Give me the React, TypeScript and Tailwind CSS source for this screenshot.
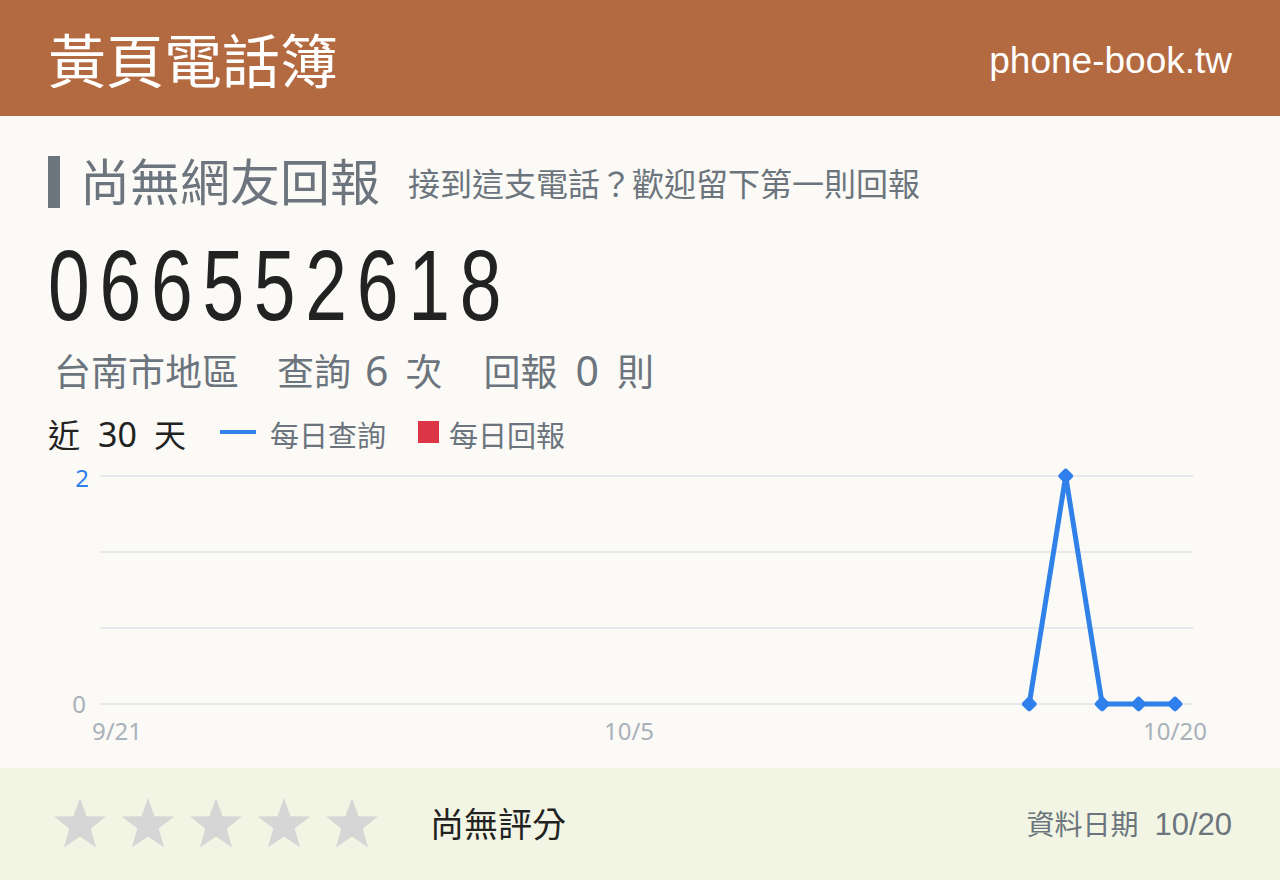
import React from "react"

const cjk = "font-['Noto_Sans','Noto_Sans_CJK_TC',sans-serif]"

// daily lookup counts for the last 30 days (null = no data)
const daily: (number | null)[] = [
  ...Array(25).fill(null),
  0, 2, 0, 0, 0,
]

function Star() {
  return (
    <svg width="56" height="56" viewBox="0 0 56 56">
      <polygon
        points="28,2 34.6,20.3 54,20.6 38.7,32.6 44.1,51.5 28,40.4 11.9,51.5 17.3,32.6 2,20.6 21.4,20.3"
        fill="#d6d6d6"
      />
    </svg>
  )
}

function Chart() {
  const x0 = 70
  const step = 36.45
  const yFor = (v: number) => 244 - v * 114
  const pts = daily
    .map((v, i) => (v === null ? null : { x: x0 + i * step, y: yFor(v) }))
    .filter((p): p is { x: number; y: number } => p !== null)

  return (
    <svg width="1184" height="300" viewBox="0 0 1184 300" className="block">
      {[16, 92, 168, 244].map((y) => (
        <line key={y} x1="52" x2="1145" y1={y} y2={y} stroke="#e7e8ec" strokeWidth="2" />
      ))}
      <g style={{ fontFamily: "'Noto Sans', sans-serif" }} fontSize="24">
        <text x="41" y="27" textAnchor="end" fill="#2f80ed">2</text>
        <text x="38" y="253" textAnchor="end" fill="#a9b0b8">0</text>
        <text x="69" y="280" textAnchor="middle" fill="#a9b1ba">9/21</text>
        <text x="581" y="280" textAnchor="middle" fill="#a9b1ba">10/5</text>
        <text x="1127" y="280" textAnchor="middle" fill="#a9b1ba">10/20</text>
      </g>
      <polyline
        points={pts.map((p) => `${p.x},${p.y}`).join(" ")}
        fill="none"
        stroke="#3182e8"
        strokeWidth="5"
        strokeLinejoin="round"
      />
      {pts.map((p) => (
        <rect
          key={p.x}
          x={p.x - 6}
          y={p.y - 6}
          width="12"
          height="12"
          rx="3"
          fill="#2f80ec"
          transform={`rotate(45 ${p.x} ${p.y})`}
        />
      ))}
    </svg>
  )
}

export default function App() {
  return (
    <div className="w-[1280px] h-[880px] bg-[#fbfaf6] flex flex-col">
      <header className="h-[116px] shrink-0 bg-[#b46a40] flex items-center justify-between pl-12 pr-12">
        <h1 className="text-[58px] leading-none text-white font-['Noto_Sans_CJK_TC',sans-serif]">黃頁電話簿</h1>
        <span className="text-[37px] leading-none text-white font-['Liberation_Sans',sans-serif] mt-1">
          phone-book.tw
        </span>
      </header>

      <main className="h-[652px] shrink-0 pl-12 pt-10">
        <div className="flex items-center h-[52px]">
          <div className="w-3 h-[52px] bg-[#6c757d]" />
          <h2 className={`ml-5 text-[50px] leading-none text-[#6c757d] ${cjk}`}>尚無網友回報</h2>
          <p className={`ml-7 mt-1 text-[32px] leading-none text-[#6c757d] ${cjk}`}>
            接到這支電話？歡迎留下第一則回報
          </p>
        </div>

        <div className="mt-[27px] h-[100px] overflow-visible">
          <div className="origin-left scale-x-[0.75] w-max text-[100px] leading-none text-[#222] tracking-[13px] font-['Liberation_Sans',sans-serif]">
            066552618
          </div>
        </div>

        <div className={`mt-[15px] h-9 flex items-baseline text-[37px] leading-none text-[#6c757d] pl-1.5 ${cjk}`}>
          <span>台南市地區</span>
          <span className="ml-[38px]">查詢</span>
          <span className="ml-3.5 text-[41px]">6</span>
          <span className="ml-[17px]">次</span>
          <span className="ml-[41px]">回報</span>
          <span className="ml-[18px] text-[41px]">0</span>
          <span className="ml-[18px]">則</span>
        </div>

        <div className={`mt-[31px] h-[30px] flex items-baseline ${cjk}`}>
          <span className="text-[32px] leading-none text-[#222]">近</span>
          <span className="ml-[18px] text-[34px] leading-none text-[#222]">30</span>
          <span className="ml-[17px] text-[32px] leading-none text-[#222]">天</span>
          <span className="ml-[34px] w-9 h-1 bg-[#3182e8] self-center" />
          <span className="ml-3.5 text-[29px] leading-none text-[#6c757d]">每日查詢</span>
          <span className="ml-8 w-[21px] h-[22px] bg-[#dc3545] self-center" />
          <span className="ml-2.5 text-[29px] leading-none text-[#6c757d]">每日回報</span>
        </div>

        <div className="mt-[13px]">
          <Chart />
        </div>
      </main>

      <footer className="h-[112px] shrink-0 bg-[#f2f5e3] flex items-center pl-[52px] pr-12">
        <div className="flex gap-3">
          {[0, 1, 2, 3, 4].map((i) => (
            <Star key={i} />
          ))}
        </div>
        <span className={`ml-[50px] text-[34px] leading-none text-[#222] ${cjk}`}>尚無評分</span>
        <div className="ml-auto flex items-baseline text-[#6c757d]">
          <span className={`text-[28px] leading-none ${cjk}`}>資料日期</span>
          <span className="ml-4 text-[31px] leading-none font-['Liberation_Sans',sans-serif]">10/20</span>
        </div>
      </footer>
    </div>
  )
}
